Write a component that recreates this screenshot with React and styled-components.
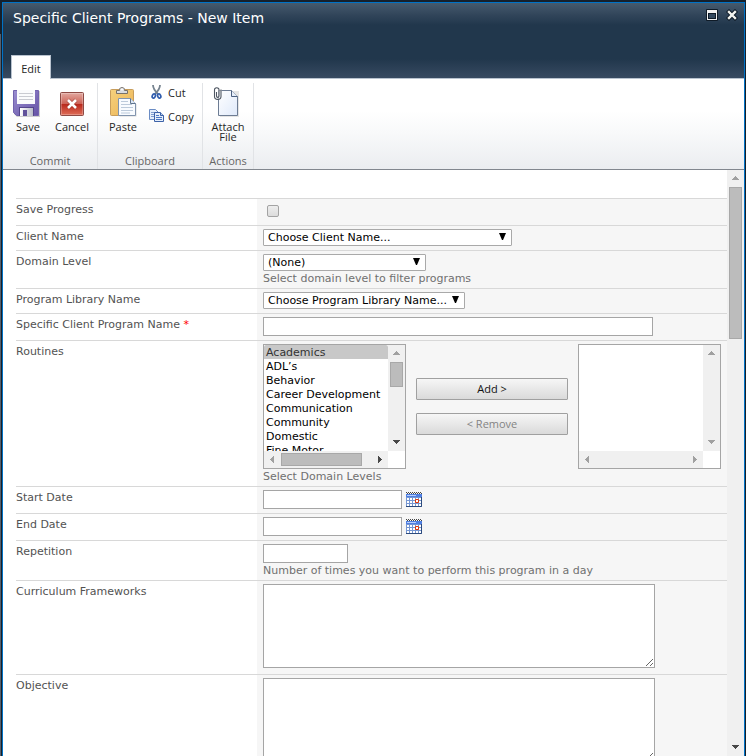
import React, { useState } from "react";
import styled, { createGlobalStyle } from "styled-components";

const GlobalStyle = createGlobalStyle`
    * {
        box-sizing: border-box;
    }

    body {
        margin: 0;
        background: #15202c;
        font-family: "DejaVu Sans", Verdana, sans-serif;
        font-size: 11px;
        line-height: 13px;
        color: #525252;
    }

    button, input, select, textarea {
        font-family: inherit;
        font-size: inherit;
        margin: 0;
    }
`;

const Page = styled.div`
    display: flex;
    height: 100vh;
    padding: 2px 1px 0 2px;
    background: linear-gradient(#56606d, #56606d) 0 34px / 1px 100% no-repeat, #15202c;
`;

const Dialog = styled.div`
    flex: 1;
    min-width: 0;
    display: flex;
    flex-direction: column;
    border: 1px solid #0072c6;
    border-bottom: none;
    background: #fff;
`;

const Header = styled.header`
    display: flex;
    flex-direction: column;
    justify-content: space-between;
    height: 76px;
    flex-shrink: 0;
    background: linear-gradient(#465a6d 0, #31455a 12px, #21374c 22px, #21374c 56px, #374a61 75px);
    border-bottom: 1px solid #b9c3cf;
`;

const TitleBar = styled.div`
    display: flex;
    justify-content: space-between;
    padding: 6px 6px 0 10px;
`;

const Title = styled.h1`
    margin: 0;
    font-size: 14px;
    font-weight: normal;
    line-height: 18px;
    color: #fff;
`;

const WindowButtons = styled.div`
    display: flex;
    gap: 8px;
`;

const IconButton = styled.button`
    display: flex;
    padding: 0;
    border: none;
    background: none;
    cursor: pointer;
`;

const Tabs = styled.div`
    display: flex;
    padding-left: 8px;
    margin-bottom: -1px;
`;

const Tab = styled.button`
    width: 40px;
    height: 24px;
    padding: 2px 0 0;
    border: 1px solid #b9c3cf;
    border-bottom: none;
    background: #fff;
    color: #262626;
    font-family: "Open Sans", "Segoe UI", sans-serif;
    font-size: 11px;
`;

const Ribbon = styled.div`
    display: flex;
    flex-shrink: 0;
    height: 91px;
    padding-top: 4px;
    border-bottom: 1px solid #82878e;
    background: linear-gradient(#fff 35%, #f8f9fa 60%, #ebedf0);
    font-family: "Open Sans", "Segoe UI", sans-serif;
`;

const RibbonGroup = styled.div`
    display: flex;
    flex-direction: column;
    justify-content: space-between;
    width: ${props => props.$width};
    border-right: 1px solid #e1e3e6;
`;

const GroupItems = styled.div`
    display: flex;
    padding-left: 5px;
    gap: ${props => props.$gap || "0"};
`;

const GroupLabel = styled.div`
    padding-bottom: 1px;
    line-height: 14px;
    text-align: center;
    color: #666;
`;

const LargeButton = styled.button`
    display: flex;
    flex-direction: column;
    align-items: center;
    gap: 5px;
    width: 40px;
    padding: 2px 0 0;
    border: none;
    background: none;
    color: #262626;
    line-height: 10px;
    cursor: pointer;
`;

const SmallButtons = styled.div`
    display: flex;
    flex-direction: column;
    gap: 8px;
    padding-top: 1px;
`;

const SmallButton = styled.button`
    display: flex;
    align-items: center;
    gap: 3px;
    height: 16px;
    padding: 0;
    border: none;
    background: none;
    color: #262626;
    cursor: pointer;
`;

const Body = styled.div`
    flex: 1;
    min-height: 0;
    display: flex;
`;

const FormPane = styled.form`
    flex: 1;
    min-width: 0;
    overflow-y: auto;
    scrollbar-width: none;
    padding: 28px 0 0 13px;
`;

const Row = styled.div`
    display: flex;
    border-top: 1px solid #d8d8d8;
`;

const LabelCell = styled.div`
    width: 241px;
    flex-shrink: 0;
    padding-top: 4px;
`;

const Required = styled.span`
    color: #ff0000;
`;

const ValueCell = styled.div`
    flex: 1;
    min-width: 0;
    padding: 3px 6px ${props => (props.$tall ? "6px" : "4px")};
    background: #f6f6f6;
`;

const Hint = styled.div`
    height: 13px;
    line-height: 15px;
    color: #707070;
`;

const Checkbox = styled.input`
    display: block;
    appearance: none;
    width: 12px;
    height: 12px;
    margin: 3px 4px 4px;
    border: 1px solid #a3a3a3;
    border-radius: 2px;
    background: linear-gradient(#ededed, #dcdcdc);

    &:checked {
        background: #666;
    }
`;

const SelectBox = styled.div`
    display: grid;
    grid-template-columns: minmax(0, 1fr);
    align-items: center;
    width: ${props => props.$width};
    max-width: 100%;
`;

const Select = styled.select`
    grid-area: 1 / 1;
    appearance: none;
    height: 17px;
    padding: 0 14px 0 4px;
    border: 1px solid #a9a9a9;
    border-radius: 1px;
    background: #fff;
    color: #000;
`;

const SelectArrow = styled.svg`
    grid-area: 1 / 1;
    justify-self: end;
    margin-right: 6px;
    margin-bottom: 2px;
    pointer-events: none;
`;

const TextInput = styled.input`
    display: block;
    width: ${props => props.$width};
    max-width: 100%;
    height: 19px;
    padding: 1px 3px;
    border: 1px solid #a5a5a5;
    background: #fff;
    color: #000;
`;

const TextArea = styled.textarea`
    display: block;
    width: 392px;
    max-width: 100%;
    height: 84px;
    border: 1px solid #a5a5a5;
    background: #fff;
`;

const DateField = styled.div`
    display: flex;
    align-items: center;
    gap: 4px;
`;

const Picker = styled.div`
    display: flex;
    align-items: center;
    gap: 10px;
`;

const PickerButtons = styled.div`
    display: flex;
    flex-direction: column;
    gap: 13px;
`;

const PickerButton = styled.button`
    width: 152px;
    height: 22px;
    padding: 0 0 2px;
    border: 1px solid #a0a0a0;
    border-radius: 1px;
    background: linear-gradient(#f6f6f6, #dadada);
    color: #111;
    font-family: "Open Sans", "Segoe UI", sans-serif;

    &:disabled {
        color: #838383;
    }
`;

const ListFrame = styled.div`
    display: grid;
    grid-template-columns: 1fr 17px;
    grid-template-rows: 1fr 17px;
    width: 143px;
    height: 125px;
    border: 1px solid #a5a5a5;
    background: #fff;
`;

const ListBox = styled.select`
    width: 100%;
    height: 106px;
    padding: 0;
    border: none;
    outline: none;
    background: #fff;
    color: #000;
    scrollbar-width: none;

    option {
        min-height: 14px;
        padding: 1px 2px 0;
        line-height: 13px;
    }

    option:checked {
        background: linear-gradient(#c8c8c8, #c8c8c8);
        color: #333;
    }
`;

const Track = styled.div`
    display: flex;
    flex-direction: ${props => (props.$horizontal ? "row" : "column")};
    justify-content: space-between;
    ${props => (props.$horizontal ? "height" : "width")}: 17px;
    flex-shrink: 0;
    background: #f0f0f0;
`;

const ArrowButton = styled.button`
    display: flex;
    align-items: center;
    justify-content: center;
    width: 17px;
    height: 17px;
    padding: 0;
    border: none;
    background: none;
    color: ${props => (props.disabled ? "#a0a0a0" : "#484848")};
`;

const Rail = styled.div`
    flex: 1;
    display: flex;
    padding: ${props => (props.$horizontal ? "2px 0" : "0 2px")};
`;

const Thumb = styled.div`
    width: ${props => (props.$horizontal ? props.$length : "13px")};
    height: ${props => (props.$horizontal ? "13px" : props.$length)};
    border: 1px solid #a8a8a8;
    background: #bcbcbc;
`;

const ARROWS = {
    up: "M5 3h1v1h1v1h1v1h1v1H2V6h1V5h1V4h1z",
    down: "M2 3h7v1H8v1H7v1H6v1H5V6H4V5H3V4H2z",
    left: "M3 5h1V4h1V3h1V2h1v7H6V8H5V7H4V6H3z",
    right: "M4 2h1v1h1v1h1v1h1v1H7v1H6v1H5v1H4z",
};

function ScrollArrow({ direction, disabled }) {
    return (
        <ArrowButton type="button" tabIndex={-1} disabled={disabled} aria-label={`Scroll ${direction}`}>
            <svg width="11" height="11" viewBox="0 0 11 11" fill="currentColor">
                <path d={ARROWS[direction]} />
            </svg>
        </ArrowButton>
    );
}

function Scrollbar({ horizontal, length, atStart, atEnd }) {
    return (
        <Track $horizontal={horizontal}>
            <ScrollArrow direction={horizontal ? "left" : "up"} disabled={atStart} />
            <Rail $horizontal={horizontal}>
                {length && <Thumb $horizontal={horizontal} $length={length} />}
            </Rail>
            <ScrollArrow direction={horizontal ? "right" : "down"} disabled={atEnd} />
        </Track>
    );
}

function MaximizeIcon() {
    return (
        <svg width="12" height="12" viewBox="0 0 12 12">
            <rect width="12" height="12" rx="1" fill="#0f1b27" />
            <path d="M1 1h10v10H1z" fill="#f2f2f2" />
            <path d="M2 4h8v6H2z" fill="#0f1b27" />
            <path d="M3 5h6v4H3z" fill="#34495f" />
        </svg>
    );
}

function CloseIcon() {
    return (
        <svg width="12" height="12" viewBox="0 0 12 12">
            <path d="M3 3l6 6M9 3l-6 6" stroke="#0f1b27" strokeWidth="4.4" strokeLinecap="square" />
            <path d="M3 3l6 6M9 3l-6 6" stroke="#f4f4f0" strokeWidth="2.4" strokeLinecap="square" />
        </svg>
    );
}

function SaveIcon() {
    return (
        <svg width="32" height="32" viewBox="0 0 32 32">
            <defs>
                <linearGradient id="floppy" x1="0" y1="0" x2="1" y2="1">
                    <stop offset="0" stopColor="#9a8ed0" />
                    <stop offset="1" stopColor="#6553a6" />
                </linearGradient>
                <linearGradient id="shutter" x1="0" y1="0" x2="1" y2="0">
                    <stop offset="0" stopColor="#fff" />
                    <stop offset="1" stopColor="#b9bcc8" />
                </linearGradient>
            </defs>
            <path d="M2 6h26v26H5l-3-3z" fill="#000" opacity=".18" />
            <path d="M1.500 5.500h25v25h-22l-3-3z" fill="url(#floppy)" stroke="#7263ae" />
            <path d="M5 5h18v14H5z" fill="#fafbfc" />
            <path d="M7 8.500h14M7 11.500h14M7 14.500h14" stroke="#c9cbd1" />
            <path d="M7 22h15v9H7z" fill="#54468c" />
            <path d="M8 23h13v8H8z" fill="url(#shutter)" />
            <path d="M11 25h4v6h-4z" fill="#61529b" />
        </svg>
    );
}

function CancelIcon() {
    return (
        <svg width="32" height="32" viewBox="0 0 32 32">
            <defs>
                <linearGradient id="cancel" x1="0" y1="0" x2="0" y2="1">
                    <stop offset="0" stopColor="#e3aaa2" />
                    <stop offset=".48" stopColor="#cd6458" />
                    <stop offset=".52" stopColor="#b92a1e" />
                    <stop offset="1" stopColor="#e0705a" />
                </linearGradient>
            </defs>
            <rect x="4.500" y="7.500" width="23" height="23" rx="1" fill="url(#cancel)" stroke="#8e4a44" />
            <rect x="5.500" y="8.500" width="21" height="21" fill="none" stroke="#fff" opacity=".25" />
            <path d="M12 15l8 8M20 15l-8 8" stroke="#7b1a12" strokeWidth="4" opacity=".4" />
            <path d="M12 15l8 8M20 15l-8 8" stroke="#fff" strokeWidth="2.600" />
        </svg>
    );
}

function PasteIcon() {
    return (
        <svg width="32" height="32" viewBox="0 0 32 32">
            <defs>
                <linearGradient id="board" x1="0" y1="0" x2="1" y2="1">
                    <stop offset="0" stopColor="#f5d07d" />
                    <stop offset="1" stopColor="#ecb556" />
                </linearGradient>
            </defs>
            <rect x="3.500" y="4.500" width="23" height="26" rx="1" fill="url(#board)" stroke="#c79d5c" />
            <path d="M9.500 8.500v-3h3v-1c0-2.600 5-2.600 5 0v1h3v3z" fill="#d9dce0" stroke="#77716a" />
            <circle cx="15" cy="4.500" r="1" fill="#fff" />
            <path d="M12.500 14.500h12l5 5v12h-17z" fill="#000" opacity=".15" />
            <path d="M11.500 13.500h12l5 5v12h-17z" fill="#f8fbff" stroke="#8093ad" />
            <path d="M23.500 13.500v5h5" fill="#dce6f3" stroke="#60758f" />
            <path d="M14 16.500h7M14 19.500h11M14 22.500h12M14 25.500h12M14 28h9" stroke="#bccadb" />
        </svg>
    );
}

function AttachIcon() {
    return (
        <svg width="32" height="32" viewBox="0 0 32 32">
            <defs>
                <linearGradient id="sheet" x1="0" y1="0" x2="1" y2="1">
                    <stop offset="0" stopColor="#fff" />
                    <stop offset="1" stopColor="#dfe9fa" />
                </linearGradient>
            </defs>
            <path d="M8 6h19v26H8z" fill="#000" opacity=".1" />
            <path d="M6.500 5.500h13l6 6v19h-19z" fill="url(#sheet)" stroke="#6d7c93" />
            <path d="M19.500 5.500v6h6" fill="#e6eefa" stroke="#4c6080" />
            <path d="M2 5h8v9H2z" fill="#fff" opacity=".6" />
            <path
                d="M4.500 7v4c0 1.800 2.500 1.800 2.500 0V5c0-3-4.500-3-4.500 0v6.500c0 3.800 6.500 3.800 6.500 0V4.500"
                fill="none"
                stroke="#4d5561"
                strokeWidth="1.100"
            />
        </svg>
    );
}

function CutIcon() {
    return (
        <svg width="16" height="16" viewBox="0 0 16 16">
            <path d="M4 1c0 3 1.500 5.500 5 9M11 1c0 3-1.500 5.500-5 9" fill="none" stroke="#76838f" strokeWidth="1.800" />
            <ellipse cx="4.800" cy="12" rx="1.500" ry="2.100" fill="none" stroke="#2f5cad" strokeWidth="1.700" transform="rotate(25 4.800 12)" />
            <ellipse cx="10.200" cy="12" rx="1.500" ry="2.100" fill="none" stroke="#2f5cad" strokeWidth="1.700" transform="rotate(-25 10.200 12)" />
        </svg>
    );
}

function CopyIcon() {
    return (
        <svg width="16" height="16" viewBox="0 0 16 16">
            <path d="M.5 1.500h6l3 3v7h-9z" fill="#e5eefb" stroke="#6a8cc4" />
            <path d="M2 4.500h4M2 6.500h4M2 8.500h4" stroke="#7e9dd0" />
            <path d="M5.500 4.500h6l3 3v6h-9z" fill="#e5eefb" stroke="#3c62a8" />
            <path d="M11.500 4.500v3h3" fill="#b8cdec" stroke="#3c62a8" />
            <path d="M7 7.500h3M7 9.500h6M7 11.500h6" stroke="#4c78c4" />
        </svg>
    );
}

function CalendarIcon() {
    return (
        <svg width="16" height="15" viewBox="0 0 16 15">
            <path d="M0 2h16v13H0z" fill="#7596d2" />
            <path d="M0 2h16v3H0z" fill="#4f7fe2" />
            <path d="M1 3.500h9" stroke="#b7cefa" />
            <path d="M0 .5h16" stroke="#444" strokeDasharray="1 1" />
            <path d="M1 1.500h15" stroke="#444" strokeDasharray="1 1" />
            <path
                d="M1 6h2v2H1zM4 6h2v2H4zM7 6h2v2H7zM10 6h2v2h-2zM13 6h2v2h-2zM1 9h2v2H1zM4 9h2v2H4zM7 9h2v2H7zM13 9h2v2h-2zM1 12h2v2H1zM4 12h2v2H4zM7 12h2v2H7zM10 12h2v2h-2zM13 12h2v2h-2z"
                fill="#fff"
            />
            <path d="M9.500 7.500h3v3h-3z" fill="#fff" stroke="#e03a0c" />
            <path d="M0 14.500h15.500V5" fill="none" stroke="#2c4a7c" />
        </svg>
    );
}

function Dropdown({ id, width, placeholder }) {
    return (
        <SelectBox $width={width}>
            <Select id={id}>
                <option>{placeholder}</option>
            </Select>
            <SelectArrow width="7" height="7" viewBox="0 0 7 7">
                <path d="M0 0h7L4 7H3z" fill="#000" />
            </SelectArrow>
        </SelectBox>
    );
}

function Field({ id, label, required, hint, tall, children }) {
    return (
        <Row>
            <LabelCell>
                <label htmlFor={id}>
                    {label}
                    {required && <Required> *</Required>}
                </label>
            </LabelCell>
            <ValueCell $tall={tall}>
                {children}
                {hint && <Hint>{hint}</Hint>}
            </ValueCell>
        </Row>
    );
}

function DateInput({ id, label }) {
    return (
        <Field id={id} label={label}>
            <DateField>
                <TextInput id={id} type="text" $width="139px" />
                <IconButton type="button" aria-label={`Select ${label}`}>
                    <CalendarIcon />
                </IconButton>
            </DateField>
        </Field>
    );
}

const routines = [
    "Academics",
    "ADL’s",
    "Behavior",
    "Career Development",
    "Communication",
    "Community",
    "Domestic",
    "Fine Motor",
];

function RoutinePicker({ id }) {
    const [selected, setSelected] = useState(["Academics"]);

    return (
        <Picker>
            <ListFrame>
                <ListBox
                    id={id}
                    multiple
                    value={selected}
                    onChange={(event) => setSelected(Array.from(event.target.selectedOptions, (o) => o.value))}
                >
                    {routines.map((name) => (
                        <option key={name} value={name}>{name}</option>
                    ))}
                </ListBox>
                <Scrollbar length="25px" atStart />
                <Scrollbar horizontal length="81px" atStart />
            </ListFrame>
            <PickerButtons>
                <PickerButton type="button">Add &gt;</PickerButton>
                <PickerButton type="button" disabled>&lt; Remove</PickerButton>
            </PickerButtons>
            <ListFrame>
                <ListBox multiple aria-label="Selected routines" />
                <Scrollbar atStart atEnd />
                <Scrollbar horizontal atStart atEnd />
            </ListFrame>
        </Picker>
    );
}

export default function App() {
    return (
        <>
            <GlobalStyle />
            <Page>
                <Dialog role="dialog" aria-labelledby="dialog-title">
                    <Header>
                        <TitleBar>
                            <Title id="dialog-title">Specific Client Programs - New Item</Title>
                            <WindowButtons>
                                <IconButton type="button" aria-label="Maximize"><MaximizeIcon /></IconButton>
                                <IconButton type="button" aria-label="Close"><CloseIcon /></IconButton>
                            </WindowButtons>
                        </TitleBar>
                        <Tabs>
                            <Tab type="button">Edit</Tab>
                        </Tabs>
                    </Header>

                    <Ribbon>
                        <RibbonGroup $width="95px">
                            <GroupItems $gap="4px">
                                <LargeButton type="button"><SaveIcon />Save</LargeButton>
                                <LargeButton type="button"><CancelIcon />Cancel</LargeButton>
                            </GroupItems>
                            <GroupLabel>Commit</GroupLabel>
                        </RibbonGroup>
                        <RibbonGroup $width="105px">
                            <GroupItems $gap="6px">
                                <LargeButton type="button"><PasteIcon />Paste</LargeButton>
                                <SmallButtons>
                                    <SmallButton type="button"><CutIcon />Cut</SmallButton>
                                    <SmallButton type="button"><CopyIcon />Copy</SmallButton>
                                </SmallButtons>
                            </GroupItems>
                            <GroupLabel>Clipboard</GroupLabel>
                        </RibbonGroup>
                        <RibbonGroup $width="51px">
                            <GroupItems>
                                <LargeButton type="button"><AttachIcon />Attach File</LargeButton>
                            </GroupItems>
                            <GroupLabel>Actions</GroupLabel>
                        </RibbonGroup>
                    </Ribbon>

                    <Body>
                        <FormPane>
                            <Field id="save-progress" label="Save Progress">
                                <Checkbox id="save-progress" type="checkbox" />
                            </Field>
                            <Field id="client-name" label="Client Name">
                                <Dropdown id="client-name" width="249px" placeholder="Choose Client Name..." />
                            </Field>
                            <Field id="domain-level" label="Domain Level" hint="Select domain level to filter programs">
                                <Dropdown id="domain-level" width="163px" placeholder="(None)" />
                            </Field>
                            <Field id="library-name" label="Program Library Name">
                                <Dropdown id="library-name" width="202px" placeholder="Choose Program Library Name..." />
                            </Field>
                            <Field id="program-name" label="Specific Client Program Name" required>
                                <TextInput id="program-name" type="text" $width="390px" />
                            </Field>
                            <Field id="routines" label="Routines" hint="Select Domain Levels">
                                <RoutinePicker id="routines" />
                            </Field>
                            <DateInput id="start-date" label="Start Date" />
                            <DateInput id="end-date" label="End Date" />
                            <Field
                                id="repetition"
                                label="Repetition"
                                hint="Number of times you want to perform this program in a day"
                            >
                                <TextInput id="repetition" type="text" $width="85px" />
                            </Field>
                            <Field id="frameworks" label="Curriculum Frameworks" tall>
                                <TextArea id="frameworks" />
                            </Field>
                            <Field id="objective" label="Objective" tall>
                                <TextArea id="objective" />
                            </Field>
                        </FormPane>
                        <Scrollbar length="152px" atStart />
                    </Body>
                </Dialog>
            </Page>
        </>
    );
}
